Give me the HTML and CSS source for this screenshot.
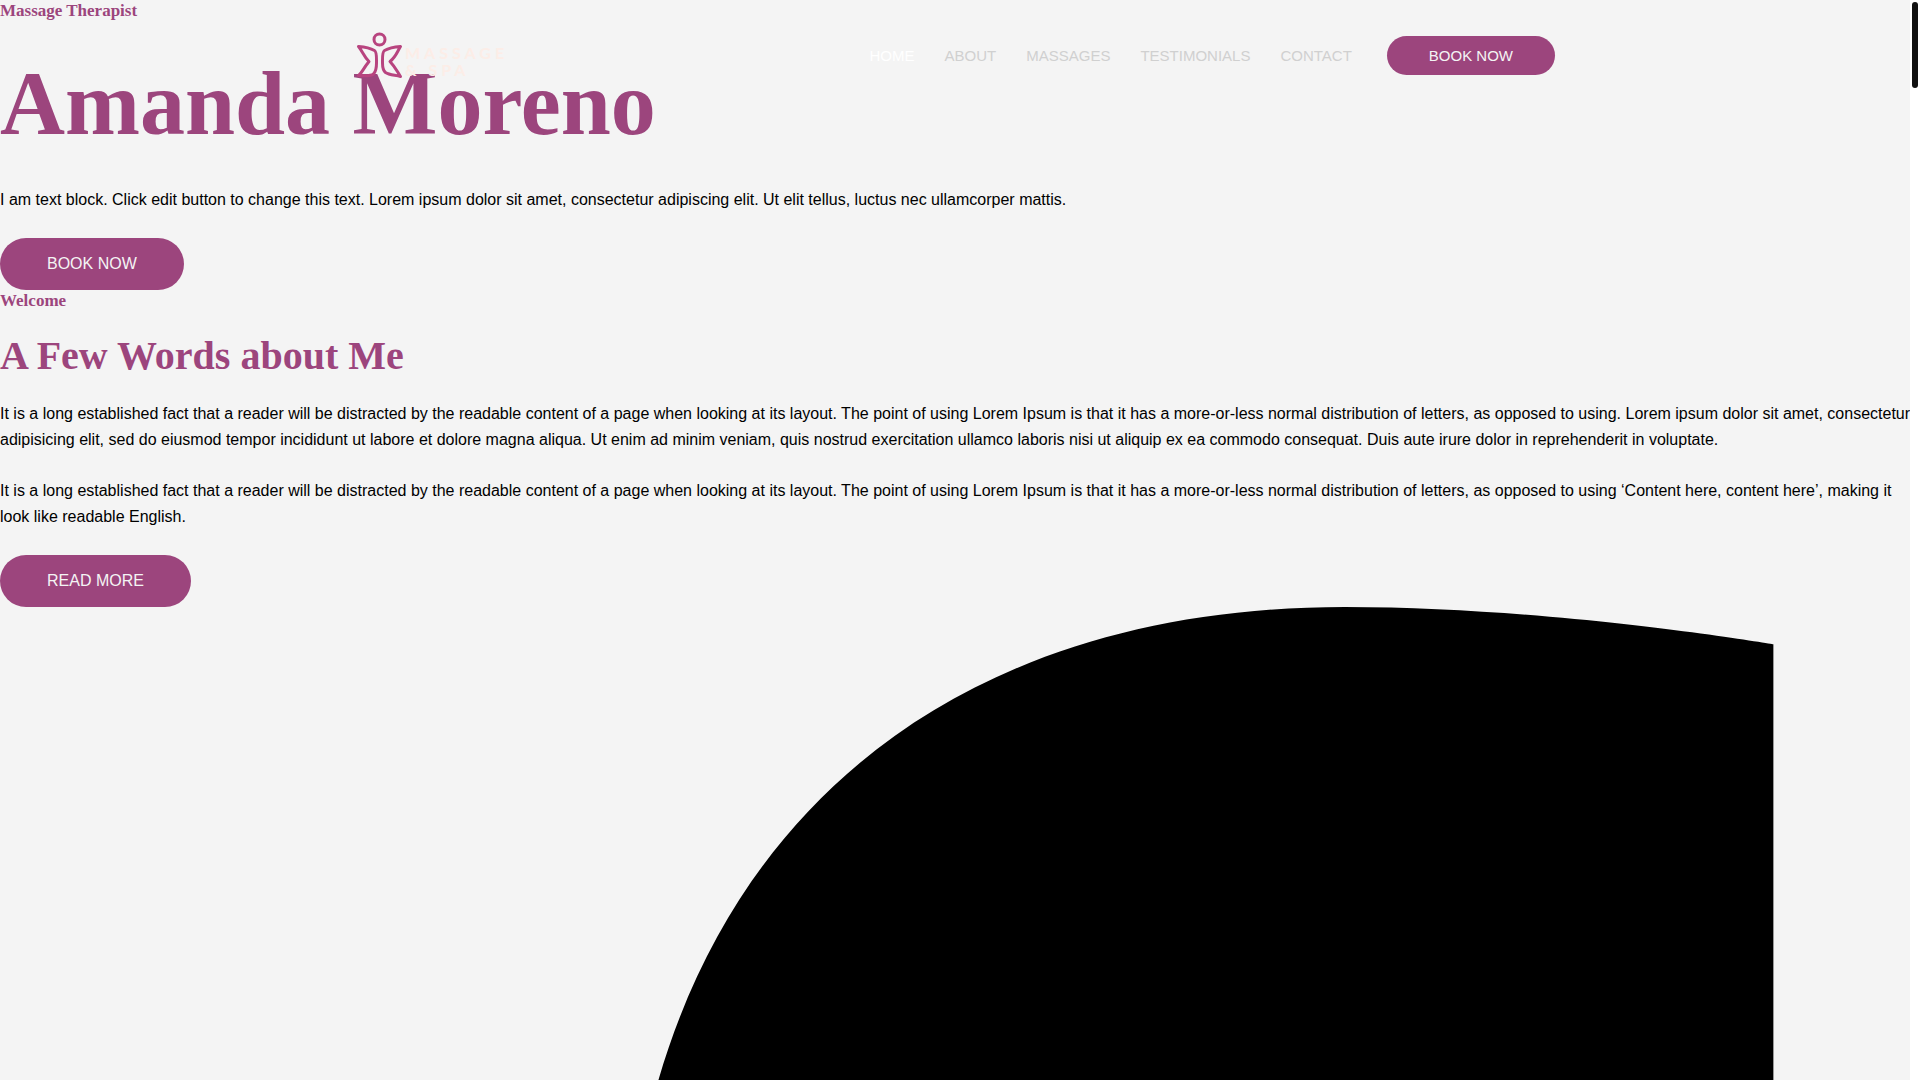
FILE: index.html
```html
<!DOCTYPE html>
<html lang="en">
<head>
<meta charset="utf-8">
<meta name="viewport" content="width=device-width, initial-scale=1">
<title>Massage &amp; Spa</title>
<link rel="stylesheet" href="styles.css">
</head>
<body>
<div class="page">
  <header class="site-header">
    <div class="header-inner">
      <a class="logo" href="#">
        <svg class="logo-mark" viewBox="0 0 48 47" fill="none" stroke="#b8447f" stroke-width="3" stroke-linejoin="round" aria-hidden="true">
          <circle cx="24.500" cy="7.500" r="5.500"/>
          <path d="M3.500 14.500C10 15 16 16.500 19.500 18.500C22 20 21.500 26 21.500 31C21.500 37 21 39.500 18.500 42C16 44 9 44 3.500 43.500C7 41 7.500 37.500 14 29.500C9 25 8 20 3.500 14.500Z"/>
          <path d="M45.500 14.500C39 15 33 16.500 29.500 18.500C27 20 27.500 26 27.500 31C27.500 36 28 38.500 30.500 40.500C34 43 40 43 45.500 44.500C42 39.500 41 36 35 29.500C41 25 42 20 45.500 14.500Z"/>
        </svg>
        <span class="logo-text">MASSAGE<br>&amp; SPA</span>
      </a>
      <nav class="menu" aria-label="Main">
        <a class="menu-link current" href="#">HOME</a>
        <a class="menu-link" href="#">ABOUT</a>
        <a class="menu-link" href="#">MASSAGES</a>
        <a class="menu-link" href="#">TESTIMONIALS</a>
        <a class="menu-link" href="#">CONTACT</a>
        <a class="button button-small" href="#">BOOK NOW</a>
      </nav>
    </div>
  </header>
  <main>
    <section>
      <h4 class="eyebrow">Massage Therapist</h4>
      <h1 class="hero-title">Amanda Moreno</h1>
      <p class="text">I am text block. Click edit button to change this text. Lorem ipsum dolor sit amet, consectetur adipiscing elit. Ut elit tellus, luctus nec ullamcorper mattis.</p>
      <a class="button" href="#">BOOK NOW</a>
    </section>
    <section>
      <h4 class="eyebrow">Welcome</h4>
      <h2 class="section-title">A Few Words about Me</h2>
      <p class="text">It is a long established fact that a reader will be distracted by the readable content of a page when looking at its layout. The point of using Lorem Ipsum is that it has a more-or-less normal distribution of letters, as opposed to using. Lorem ipsum dolor sit amet, consectetur adipisicing elit, sed do eiusmod tempor incididunt ut labore et dolore magna aliqua. Ut enim ad minim veniam, quis nostrud exercitation ullamco laboris nisi ut aliquip ex ea commodo consequat. Duis aute irure dolor in reprehenderit in voluptate.</p>
      <p class="text">It is a long established fact that a reader will be distracted by the readable content of a page when looking at its layout. The point of using Lorem Ipsum is that it has a more-or-less normal distribution of letters, as opposed to using ‘Content here, content here’, making it look like readable English.</p>
      <a class="button" href="#">READ MORE</a>
    </section>
    <a class="social" href="#" aria-label="Facebook">
      <svg class="social-icon" viewBox="0 0 320 512" aria-hidden="true"><path d="M279.140 288l14.220-92.660h-88.910v-60.130c0-25.350 12.420-50.060 52.240-50.060h40.420V6.260S260.430 0 225.360 0c-73.220 0-121.080 44.380-121.080 124.720v70.620H22.890V288h81.390v224h100.170V288z"/></svg>
    </a>
  </main>
</div>
<div class="scroll-rail" aria-hidden="true"><div class="scroll-thumb"></div></div>
</body>
</html>
```
FILE: styles.css
```css
* {
  box-sizing: border-box;
}

body {
  margin: 0;
  display: flex;
  height: 100vh;
  overflow: hidden;
  background: #fff;
  color: #000;
  font: 16px/26px "Liberation Sans", Arial, sans-serif;
}

a {
  text-decoration: none;
}

.page {
  position: relative;
  flex: 1;
  min-width: 0;
  overflow: hidden;
  background: #f4f4f4;
}

/* The header floats over the hero */
.site-header {
  position: absolute;
  top: 0;
  left: 0;
  right: 0;
  z-index: 2;
  padding: 32px 20px;
}

.header-inner {
  display: flex;
  align-items: center;
  justify-content: space-between;
  max-width: 1200px;
  margin: 0 auto;
}

.logo {
  display: flex;
  align-items: center;
  gap: 2px;
}

.logo-mark {
  width: 48px;
  height: 47px;
}

.logo-text {
  padding-top: 10px;
  color: #fcede7;
  font: 700 16px/17px Lato, sans-serif;
  letter-spacing: 4px;
}

.menu {
  display: flex;
  align-items: center;
  gap: 30px;
  font-size: 15px;
}

.menu-link {
  color: #d0d0d0;
}

.menu-link.current {
  color: #fff;
}

.button {
  display: inline-block;
  vertical-align: top;
  padding: 13px 47px;
  border-radius: 26px;
  background: #9c457d;
  color: #f4f4f4;
  line-height: 26px;
}

.button-small {
  margin-left: 5px;
  padding: 10px 42px;
  border-radius: 20px;
  line-height: 19px;
}

.eyebrow,
.hero-title,
.section-title {
  color: #9c457d;
  font-family: "Liberation Serif", "Times New Roman", serif;
  font-weight: 700;
}

.eyebrow {
  margin: 0;
  font-size: 17px;
  line-height: 21px;
}

.hero-title {
  margin: 28px 0;
  font-size: 90px;
  line-height: 110px;
}

.section-title {
  margin: 21px 0;
  font-size: 40px;
  line-height: 48px;
}

.text {
  margin: 0 -4px 25px 0;
}

.social {
  display: block;
}

.social-icon {
  display: block;
  width: 100%;
}

.scroll-rail {
  width: 10px;
  padding: 2px;
}

.scroll-thumb {
  width: 6px;
  height: 86px;
  border-radius: 3px;
  background: #111;
}
```
